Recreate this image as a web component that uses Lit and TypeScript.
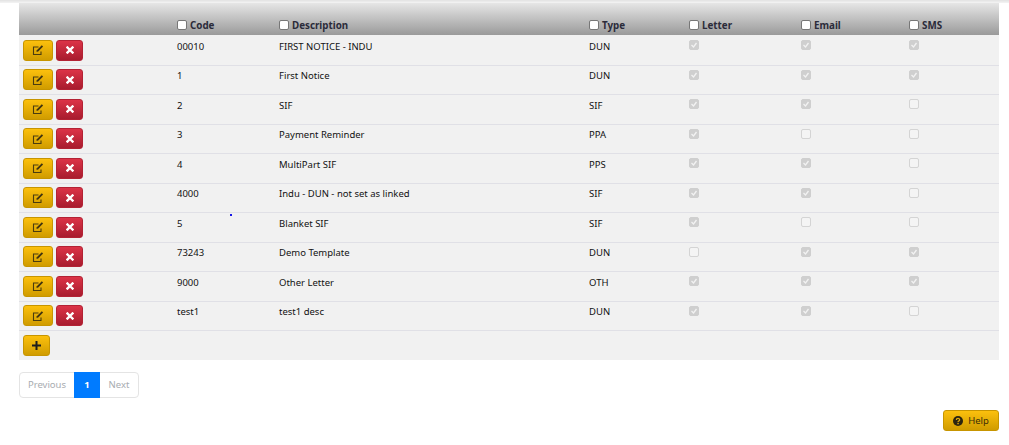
import { LitElement, html, css, svg } from 'lit'
import { customElement } from 'lit/decorators.js'

type Row = { code: string; desc: string; type: string; letter: boolean; email: boolean; sms: boolean }

const rows: Row[] = [
  { code: '00010', desc: 'FIRST NOTICE - INDU', type: 'DUN', letter: true, email: true, sms: true },
  { code: '1', desc: 'First Notice', type: 'DUN', letter: true, email: true, sms: true },
  { code: '2', desc: 'SIF', type: 'SIF', letter: true, email: true, sms: false },
  { code: '3', desc: 'Payment Reminder', type: 'PPA', letter: true, email: false, sms: false },
  { code: '4', desc: 'MultiPart SIF', type: 'PPS', letter: true, email: true, sms: false },
  { code: '4000', desc: 'Indu - DUN - not set as linked', type: 'SIF', letter: true, email: true, sms: false },
  { code: '5', desc: 'Blanket SIF', type: 'SIF', letter: true, email: false, sms: false },
  { code: '73243', desc: 'Demo Template', type: 'DUN', letter: false, email: true, sms: true },
  { code: '9000', desc: 'Other Letter', type: 'OTH', letter: true, email: true, sms: true },
  { code: 'test1', desc: 'test1 desc', type: 'DUN', letter: true, email: true, sms: false },
]

const editIcon = svg`<svg class="ico" viewBox="0 0 12 12" width="12" height="12">
  <path d="M9 7.500V10.500H1.500V3H6.500" fill="none" stroke="#4a3c10" stroke-width="1.100"/>
  <path d="M4.500 8l.3-1.800L9.800 1.200l1.300 1.300L6.200 7.600z" fill="#3f3310"/>
</svg>`

const xIcon = svg`<svg class="ico" viewBox="0 0 8 8" width="8" height="8">
  <path d="M1.500 1.500l5 5M6.500 1.500l-5 5" stroke="#fff" stroke-width="2.400" stroke-linecap="square"/>
</svg>`

const plusIcon = svg`<svg class="ico" viewBox="0 0 9 9" width="9" height="9">
  <path d="M4.500 0v9M0 4.500h9" stroke="#1d1d1d" stroke-width="2"/>
</svg>`

const helpIcon = svg`<svg class="ico" viewBox="0 0 12 12" width="10" height="10">
  <circle cx="6" cy="6" r="6" fill="#2a2410"/>
  <path d="M4 4.700c0-2.500 4-2.500 4-.1 0 1.400-2 1.300-2 2.500" fill="none" stroke="#e2a90a" stroke-width="1.500"/>
  <rect x="5.200" y="8.200" width="1.700" height="1.700" fill="#e2a90a"/>
</svg>`

@customElement('app-root')
export class AppRoot extends LitElement {
  static styles = css`
    :host {
      display: block;
      position: relative;
      background: #fff;
      height: 445px;
      font-family: 'Noto Sans', sans-serif;
      font-size: 9.500px;
      color: #111;
      overflow: hidden;
    }

    .topline {
      height: 3px;
      background: linear-gradient(#e2e2e2, #f4f4f4);
    }

    .wrap {
      padding: 0 10px 0 19px;
    }

    table {
      width: 980px;
      border-collapse: separate;
      border-spacing: 0;
      table-layout: fixed;
    }

    th {
      height: 33px;
      padding: 0 4px 3px;
      box-sizing: border-box;
      text-align: left;
      vertical-align: bottom;
      font-size: 9.800px;
      font-weight: bold;
      color: #2b2b3a;
      background: linear-gradient(#e6e6e6, #9a9a9a);
      border-bottom: 1px solid #f1f1f1;
    }

    th label {
      display: flex;
      align-items: center;
      gap: 3px;
      height: 14px;
    }

    .hbox {
      width: 8px;
      height: 8px;
      background: #fff;
      border: 1px solid #777;
      border-radius: 2px;
    }

    td {
      height: 29.500px;
      padding: 4.500px 4px 0;
      box-sizing: border-box;
      vertical-align: top;
      background: #f1f1f1;
      border-bottom: 1px solid #e0e0e6;
      line-height: 12px;
    }

    td.actions {
      padding: 3.500px 4px 0;
    }

    td.check {
      padding-top: 4px;
    }

    .foot td {
      height: 29px;
      padding-top: 4px;
      border-bottom: 0;
    }

    .btns {
      display: flex;
      gap: 3px;
    }

    .btn {
      display: flex;
      align-items: center;
      justify-content: center;
      height: 21px;
      box-sizing: border-box;
      border-radius: 3px;
      border: 1px solid #c79500;
      background: linear-gradient(#fcc00d, #d09c00);
    }

    .edit {
      width: 30px;
    }

    .del {
      width: 27px;
      border-color: #b32234;
      background: linear-gradient(#dc3347, #a81c2e);
    }

    .add {
      width: 27px;
    }

    .cb {
      display: block;
      width: 8px;
      height: 8px;
      border: 1px solid #d4d4d4;
      border-radius: 2px;
      background: #f4f4f4;
    }

    .cb.on {
      background: #cfcfcf;
      border-color: #cfcfcf;
    }

    .cb svg {
      display: block;
    }

    .pager {
      display: flex;
      width: max-content;
      margin: 12px 0 0 0;
      height: 26px;
      box-sizing: border-box;
      border: 1px solid #e4e4e4;
      border-radius: 4px;
      color: #a8acb0;
      line-height: 24px;
    }

    .pager span {
      width: 54px;
      text-align: center;
    }

    .pager .next {
      width: 38px;
    }

    .pager .cur {
      width: 26px;
      margin: -1px 0;
      line-height: 26px;
      font-weight: bold;
      color: #fff;
      background: #007bff;
    }

    .bottom {
      display: flex;
      justify-content: flex-end;
      margin-top: 12px;
    }

    .help {
      gap: 5px;
      width: 56px;
      color: #3a2e08;
    }

    .speck {
      position: absolute;
      left: 230px;
      top: 214px;
      width: 2px;
      height: 2px;
      background: #1616e8;
    }
  `

  box(on: boolean) {
    return html`<span class="cb ${on ? 'on' : ''}">
      ${on
        ? svg`<svg viewBox="0 0 8 8" width="8" height="8"><path d="M1.500 4l2 2 3-4" fill="none" stroke="#f2f2f2" stroke-width="1.300"/></svg>`
        : ''}
    </span>`
  }

  head(name: string) {
    return html`<th><label><span class="hbox"></span>${name}</label></th>`
  }

  render() {
    return html`
      <div class="topline"></div>
      <div class="wrap">
        <table>
          <colgroup>
            <col style="width:154px" /><col style="width:102px" /><col style="width:310px" />
            <col style="width:100px" /><col style="width:112px" /><col style="width:108px" /><col style="width:94px" />
          </colgroup>
          <thead>
            <tr>
              <th></th>
              ${['Code', 'Description', 'Type', 'Letter', 'Email', 'SMS'].map((h) => this.head(h))}
            </tr>
          </thead>
          <tbody>
            ${rows.map(
              (r) => html`<tr>
                <td class="actions">
                  <div class="btns">
                    <div class="btn edit">${editIcon}</div>
                    <div class="btn del">${xIcon}</div>
                  </div>
                </td>
                <td>${r.code}</td>
                <td>${r.desc}</td>
                <td>${r.type}</td>
                <td class="check">${this.box(r.letter)}</td>
                <td class="check">${this.box(r.email)}</td>
                <td class="check">${this.box(r.sms)}</td>
              </tr>`
            )}
            <tr class="foot">
              <td class="actions" colspan="7"><div class="btn add">${plusIcon}</div></td>
            </tr>
          </tbody>
        </table>
        <div class="pager">
          <span>Previous</span><span class="cur">1</span><span class="next">Next</span>
        </div>
        <div class="bottom"><div class="btn help">${helpIcon}Help</div></div>
      </div>
      <div class="speck"></div>
    `
  }
}
